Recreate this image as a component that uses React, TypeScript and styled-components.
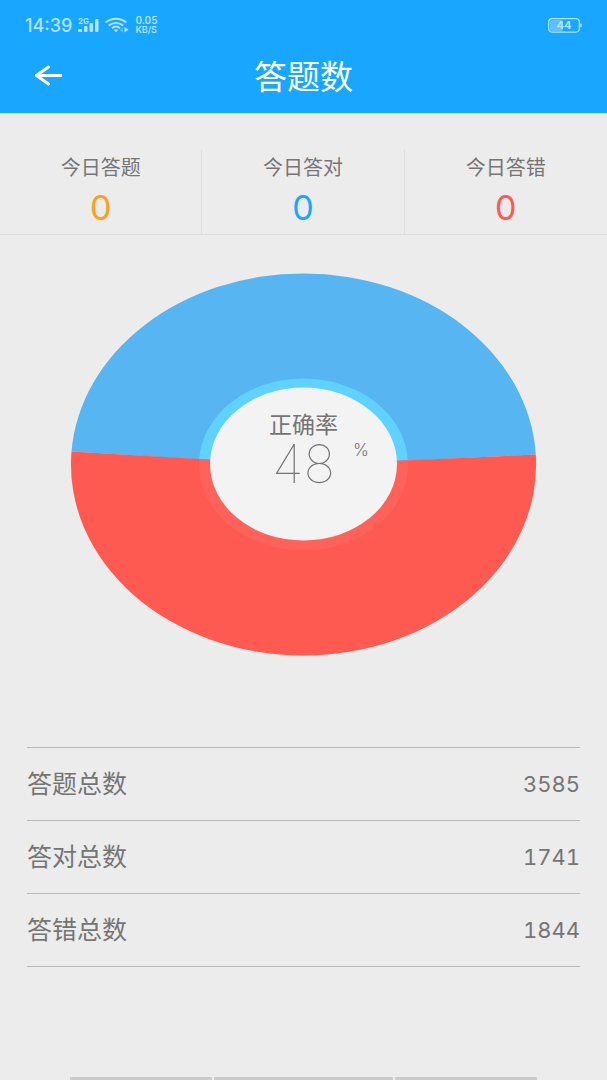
import React from "react";
import styled, { createGlobalStyle } from "styled-components";

const GlobalStyle = createGlobalStyle`
  *, *::before, *::after { box-sizing: border-box; }
  body {
    margin: 0;
    background: #ececec;
    color: #757575;
    font-family: Inter, "Noto Sans CJK SC", sans-serif;
  }
`;

const Page = styled.div`
  min-height: 100vh;
  display: flex;
  flex-direction: column;
`;

const Header = styled.header`
  background: #18a6ff;
  color: #fff;
`;

const StatusBar = styled.div`
  display: flex;
  align-items: center;
  justify-content: space-between;
  height: 50px;
  padding: 0 25px;
  color: #b4e1fd;
`;

const StatusGroup = styled.div`
  display: flex;
  align-items: center;
  gap: 6px;
`;

const Clock = styled.time`
  padding-top: 2px;
  font-size: 18px;
  line-height: 20px;
  font-weight: 500;
`;

const Speed = styled.span`
  display: grid;
  font-size: 9px;
  line-height: 9px;
  font-weight: 600;
`;

const SpeedValue = styled.span`
  font-size: 10px;
`;

const NavBar = styled.div`
  display: grid;
  grid-template-columns: 64px 1fr 64px;
  align-items: center;
  height: 63px;
  padding: 0 16px 12px;
`;

const BackButton = styled.button`
  display: flex;
  align-items: center;
  justify-content: center;
  height: 48px;
  padding: 0;
  border: 0;
  background: none;
  color: inherit;
  cursor: pointer;
`;

const Title = styled.h1`
  margin: 0;
  padding-top: 2px;
  font-size: 33px;
  line-height: 48px;
  font-weight: 400;
  text-align: center;
`;

const Today = styled.section`
  display: grid;
  grid-template-columns: repeat(3, 1fr);
  margin-top: 37px;
  border-bottom: 1px solid #dedede;
`;

const TodayItem = styled.div`
  display: flex;
  flex-direction: column;
  align-items: center;
  height: 84px;
  padding-top: 4px;

  &:not(:last-child) {
    border-right: 1px solid #dedede;
  }
`;

const TodayLabel = styled.span`
  font-size: 20px;
  line-height: 28px;
`;

const TodayValue = styled.strong<{ $color: string }>`
  color: ${(p) => p.$color};
  font-size: 34px;
  line-height: 52px;
  font-weight: 400;
`;

const ChartArea = styled.section`
  position: relative;
  margin: 38px 70px 91px;
`;

const Donut = styled.svg`
  display: block;
  width: 100%;
  height: auto;
`;

const ChartCaption = styled.div`
  position: absolute;
  inset: 0;
  display: flex;
  flex-direction: column;
  align-items: center;
  justify-content: center;
  padding-bottom: 30px;
`;

const CaptionLabel = styled.span`
  font-size: 23px;
  line-height: 28px;
`;

const CaptionValue = styled.span`
  position: relative;
  font-size: 53px;
  line-height: 50px;
  font-weight: 100;
`;

const Percent = styled.span`
  position: absolute;
  top: 1px;
  left: 100%;
  margin-left: 18px;
  font-size: 17px;
  line-height: 20px;
  font-weight: 300;
`;

const Totals = styled.dl`
  margin: 0 27px;
  border-top: 1px solid #b9b9b9;
`;

const TotalRow = styled.div`
  display: flex;
  align-items: center;
  justify-content: space-between;
  height: 73px;
  border-bottom: 1px solid #b9b9b9;
`;

const TotalLabel = styled.dt`
  font-size: 25px;
  line-height: 36px;
`;

const TotalValue = styled.dd`
  margin: 0;
  font-size: 22px;
  line-height: 36px;
  font-variant-numeric: tabular-nums;
`;

const GestureBar = styled.div`
  display: grid;
  grid-template-columns: 141fr 179fr 141fr;
  gap: 2px;
  margin: auto 70px 0;
`;

const GestureSegment = styled.span`
  height: 3px;
  border-radius: 1px 1px 0 0;
  background: #cbcbcb;
`;

const Battery = styled.span`
  position: relative;
  display: flex;
`;

const BatteryText = styled.span`
  display: flex;
  align-items: center;
  justify-content: center;
  position: absolute;
  inset: 0 2px 0 0;
  font-size: 11px;
  line-height: 14px;
  font-weight: 700;
`;

const today = [
  { label: "今日答题", value: 0, color: "#ff9f1a" },
  { label: "今日答对", value: 0, color: "#18a6ff" },
  { label: "今日答错", value: 0, color: "#ff5a52" },
];

const totals = [
  { label: "答题总数", value: 3585 },
  { label: "答对总数", value: 1741 },
  { label: "答错总数", value: 1844 },
];

function SignalIcon() {
  return (
    <svg width="21" height="18" viewBox="0 0 21 18" fill="currentColor">
      <text x="0" y="8" fontSize="8" fontWeight="700">2G</text>
      <rect x="0" y="13" width="4" height="3" rx="1" />
      <rect x="6" y="10" width="3.500" height="6" rx="1" />
      <rect x="11.500" y="7" width="3.500" height="9" rx="1" />
      <rect x="17" y="3" width="3.500" height="13" rx="1" />
    </svg>
  );
}

function WifiIcon() {
  return (
    <svg width="24" height="16" viewBox="0 0 24 16" fill="none" stroke="currentColor" strokeWidth="2" aria-label="Wi-Fi">
      <path d="M.7 5.600C6.500.6 15.500.6 21.300 5.600M3.900 8.500C8 5 14 5 18.100 8.500M7 11.300c2.500-2.200 5.500-2.200 8 0" />
      <path d="M8.800 12.900q2.200-1.500 4.400 0L11 15.300z" fill="currentColor" stroke="none" />
      <path d="M19.500 10v5.500l4-2.700z" fill="currentColor" stroke="none" />
      <path d="M18 10v5.500l-3.500-2.700z" fill="currentColor" stroke="none" opacity=".4" />
    </svg>
  );
}

function BatteryIcon() {
  return (
    <Battery>
      <svg width="34" height="15" viewBox="0 0 34 15" fill="none" aria-hidden="true">
        <rect x="2" y="2" width="13" height="11" rx="2" fill="#5fc1fe" />
        <rect x=".7" y=".7" width="30.600" height="13.400" rx="3.500" stroke="currentColor" strokeWidth="1.200" />
        <path d="M32.200 5.500h.6q.9 0 .9 1v1.800q0 1-.9 1h-.6z" fill="currentColor" />
      </svg>
      <BatteryText>44</BatteryText>
    </Battery>
  );
}

export default function App() {
  return (
    <Page>
      <GlobalStyle />
      <Header>
        <StatusBar>
          <StatusGroup>
            <Clock>14:39</Clock>
            <SignalIcon />
            <WifiIcon />
            <Speed>
              <SpeedValue>0.05</SpeedValue>
              <span>KB/S</span>
            </Speed>
          </StatusGroup>
          <BatteryIcon />
        </StatusBar>
        <NavBar>
          <BackButton aria-label="返回">
            <svg width="28" height="22" viewBox="0 0 28 22" fill="none" stroke="currentColor" strokeWidth="3">
              <path d="M2.500 10.500H27.500M14.500 2L2.500 10.500L14.500 19" strokeLinejoin="round" strokeLinecap="round" />
            </svg>
          </BackButton>
          <Title>答题数</Title>
        </NavBar>
      </Header>

      <Today>
        {today.map((t) => (
          <TodayItem key={t.label}>
            <TodayLabel>{t.label}</TodayLabel>
            <TodayValue $color={t.color}>{t.value}</TodayValue>
          </TodayItem>
        ))}
      </Today>

      <ChartArea>
        <Donut viewBox="0 0 467 383" aria-hidden="true">
          <path d="M1.500 178.500A232.500 191 0 0 1 233.500 .5A232.500 191 0 0 1 465.800 181.500L233.500 193Z" fill="#57b6f1" />
          <path d="M1.500 178.500L233.500 192L465.800 181.500A232.500 191 0 0 1 233.500 382.500A232.500 191 0 0 1 1.500 178.500Z" fill="#ff5a52" />
          <path d="M129.200 186A104.500 86 0 0 1 233.500 105.500A104.500 86 0 0 1 337.900 187.300L233.500 192Z" fill="#60d2ff" />
          <path d="M129.200 186L233.500 192L337.900 187.300A104.500 86 0 0 1 233.500 277.500A104.500 86 0 0 1 129.200 186Z" fill="#ff625b" />
          <ellipse cx="233.500" cy="191" rx="93.500" ry="76.500" fill="#f3f3f3" />
        </Donut>
        <ChartCaption>
          <CaptionLabel>正确率</CaptionLabel>
          <CaptionValue>
            48
            <Percent>%</Percent>
          </CaptionValue>
        </ChartCaption>
      </ChartArea>

      <Totals>
        {totals.map((t) => (
          <TotalRow key={t.label}>
            <TotalLabel>{t.label}</TotalLabel>
            <TotalValue>{t.value}</TotalValue>
          </TotalRow>
        ))}
      </Totals>

      <GestureBar aria-hidden="true">
        <GestureSegment />
        <GestureSegment />
        <GestureSegment />
      </GestureBar>
    </Page>
  );
}
